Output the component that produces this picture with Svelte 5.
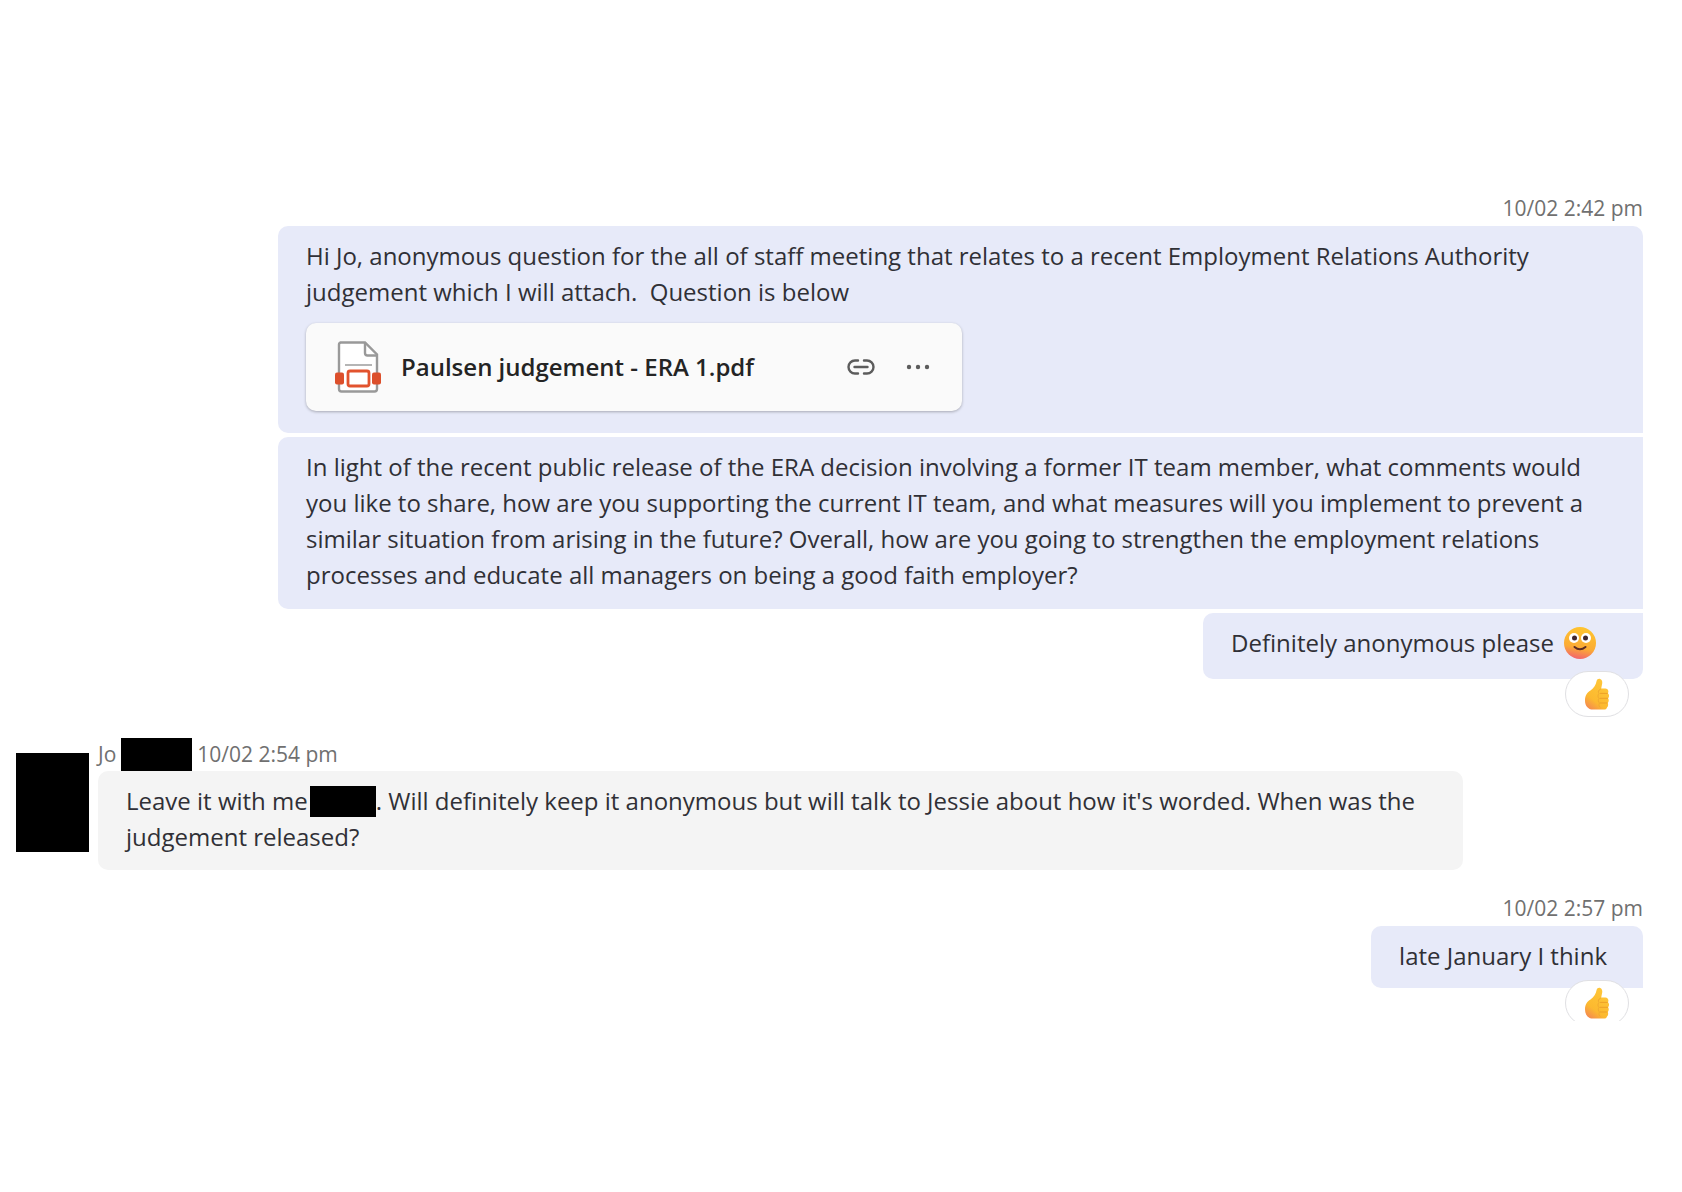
<script>
    let { fileName = 'Paulsen judgement - ERA 1.pdf' } = $props();
</script>

{#snippet thumb(id)}
    <svg width="26" height="32" viewBox="0 0 26 32" aria-hidden="true">
        <defs>
            <linearGradient id={id} x1="0.8" y1="0" x2="0.2" y2="1">
                <stop offset="0" stop-color="#ffc83a" />
                <stop offset="0.7" stop-color="#fcb92f" />
                <stop offset="1" stop-color="#f48a50" />
            </linearGradient>
        </defs>
        <path
            d="M12.600 3C13 1 14.800.3 16.200.900C18 1.600 18.500 3.500 18.200 5.400L17.200 10.400H21.400C24 10.400 25.200 13.400 23.900 15.200C25.500 16.500 25.300 19.200 24.100 20.200C25.100 21.500 24.900 24 23.700 25C24.500 26.200 24.300 28.400 23 29.400C22.500 31 21.500 31.600 19.500 31.600H9C4 31.600 1 27.800 1 22.500C1 17.600 3 14.700 6.500 12.500C10 10.200 11.900 6.700 12.600 3Z"
            fill="url(#{id})"
        />
        <path d="M16.500 15.400H23.300M16 20.300H23.500M16.200 25H23" fill="none" stroke="#eda028" stroke-width="1" stroke-linecap="round" />
        <path d="M16.800 11C14.300 12 13.800 14 15 15.600C13.500 17 13.700 19.300 15 20.300C14 21.800 14.100 23.800 15.400 25C14.600 26.700 15 28.600 16.400 29.500" fill="none" stroke="#f0a92f" stroke-width="1" />
    </svg>
{/snippet}

<main class="chat">
    <section class="group sent">
        <time class="stamp">10/02 2:42 pm</time>

        <article class="bubble first">
            <p>Hi Jo, anonymous question for the all of staff meeting that relates to a recent Employment Relations Authority judgement which I will attach.&nbsp; Question is below</p>
            <div class="file-card">
                <svg class="file-icon" width="48" height="52" viewBox="0 0 48 52" aria-hidden="true">
                    <path d="M6 1.500H31L43 13.500V48Q43 50.500 40.500 50.500H7.500Q5 50.500 5 48V3.500Q5 1.500 7 1.500Z" fill="#fff" stroke="#999" stroke-width="2.400" />
                    <path d="M31 1.500V12Q31 14.500 33.500 14.500H43" fill="none" stroke="#999" stroke-width="2.400" />
                    <path d="M11 24H38" stroke="#b5b5b5" stroke-width="2" />
                    <rect x="1" y="31.500" width="9" height="12" rx="2" fill="#dc4f2b" />
                    <rect x="38" y="31.500" width="9" height="12" rx="2" fill="#dc4f2b" />
                    <rect x="14" y="30" width="21" height="15" rx="2" fill="#fff" stroke="#e2532e" stroke-width="2.800" />
                </svg>
                <a class="file-name" href="#file">{fileName}</a>
                <button class="icon-btn" aria-label="Copy link">
                    <svg width="32" height="32" viewBox="0 0 32 32" fill="none" stroke="#5c5c5c" stroke-width="2.400" stroke-linecap="round" aria-hidden="true">
                        <path d="M13 9.500H10A6.500 6.500 0 0 0 10 22.500H13M19 9.500H22A6.500 6.500 0 0 1 22 22.500H19M9.500 16H22.500" />
                    </svg>
                </button>
                <button class="icon-btn" aria-label="More options">
                    <svg width="32" height="32" viewBox="0 0 32 32" fill="#5c5c5c" aria-hidden="true">
                        <circle cx="7" cy="16" r="2.200" />
                        <circle cx="16" cy="16" r="2.200" />
                        <circle cx="25" cy="16" r="2.200" />
                    </svg>
                </button>
            </div>
        </article>

        <article class="bubble middle">
            <p>In light of the recent public release of the ERA decision involving a former IT team member, what comments would you like to share, how are you supporting the current IT team, and what measures will you implement to prevent a similar situation from arising in the future? Overall, how are you going to strengthen the employment relations processes and educate all managers on being a good faith employer?</p>
        </article>

        <article class="bubble last">
            <p class="with-emoji">
                Definitely anonymous please
                <svg class="smile" width="34" height="34" viewBox="0 0 34 34" role="img" aria-label="Smile">
                    <defs>
                        <linearGradient id="face" x1="0.6" y1="0" x2="0.4" y2="1">
                            <stop offset="0" stop-color="#ffc52f" />
                            <stop offset="0.65" stop-color="#fbab35" />
                            <stop offset="1" stop-color="#f2636f" />
                        </linearGradient>
                    </defs>
                    <circle cx="17" cy="17" r="16" fill="url(#face)" />
                    <circle cx="11" cy="12" r="5" fill="#fff" />
                    <circle cx="23" cy="12" r="5" fill="#fff" />
                    <circle cx="11.500" cy="12" r="2.500" fill="#40272f" />
                    <circle cx="22.500" cy="12" r="2.500" fill="#40272f" />
                    <path d="M11.500 21Q17 25.500 22.500 21" fill="none" stroke="#5a2b22" stroke-width="2" stroke-linecap="round" />
                </svg>
            </p>
            <button class="reaction" aria-label="Like, 1 reaction">{@render thumb('thumb-a')}</button>
        </article>
    </section>

    <section class="received">
        <span class="avatar"></span>
        <div class="thread">
            <header class="author">
                <span>Jo</span>
                <span class="redacted-name"></span>
                <time>10/02 2:54 pm</time>
            </header>
            <article class="bubble grey">
                <p>Leave it with me<span class="redacted"></span>. Will definitely keep it anonymous but will talk to Jessie about how it's worded. When was the judgement released?</p>
            </article>
        </div>
    </section>

    <section class="group sent">
        <time class="stamp">10/02 2:57 pm</time>
        <article class="bubble single">
            <p>late January I think</p>
            <button class="reaction" aria-label="Like, 1 reaction">{@render thumb('thumb-b')}</button>
        </article>
    </section>
</main>

<style>
    :global(body) {
        margin: 0;
        background: #fff;
    }

    .chat {
        padding: 195px 39px 33px 16px;
        overflow: hidden;
        color: #303036;
        font-family: "Open Sans", "Noto Sans", sans-serif;
        font-size: 24px;
        line-height: 36px;
    }

    p {
        margin: 0;
    }

    .group {
        display: flex;
        flex-direction: column;
        gap: 4px;
    }

    .sent {
        align-items: flex-end;
        margin-left: 262px;
    }

    .stamp,
    .author {
        color: #707070;
        font-size: 21px;
        line-height: 27px;
    }

    .bubble {
        position: relative;
        box-sizing: border-box;
        padding: 12px 36px 14px 28px;
        background: #e7eaf9;
        border-radius: 10px;
    }

    .first {
        width: 100%;
        padding-bottom: 22px;
        border-bottom-right-radius: 0;
    }

    .middle {
        padding-bottom: 16px;
        border-top-right-radius: 0;
        border-bottom-right-radius: 0;
    }

    .last {
        padding-bottom: 18px;
        border-top-right-radius: 0;
    }

    .single {
        border-bottom-right-radius: 0;
    }

    .file-card {
        display: flex;
        align-items: center;
        box-sizing: border-box;
        max-width: 656px;
        height: 88px;
        margin-top: 13px;
        padding: 0 28px;
        background: #fafafa;
        border-radius: 10px;
        box-shadow: 0 1px 3px rgba(0, 0, 0, 0.28);
    }

    .file-icon {
        flex: none;
        margin-right: 19px;
    }

    .file-name {
        flex: 1;
        color: #242424;
        font-weight: 600;
        text-decoration: none;
    }

    .icon-btn {
        width: 32px;
        height: 32px;
        margin-left: 25px;
        padding: 0;
        border: none;
        background: none;
        cursor: pointer;
    }

    .icon-btn svg {
        display: block;
    }

    .with-emoji {
        display: flex;
        align-items: center;
        gap: 9px;
        padding-right: 10px;
    }

    .reaction {
        position: absolute;
        right: 14px;
        top: calc(100% - 8px);
        display: flex;
        align-items: center;
        justify-content: center;
        width: 64px;
        height: 46px;
        padding: 0;
        background: #fff;
        border: 1px solid #e0e0e3;
        border-radius: 23px;
        cursor: pointer;
    }

    .received {
        display: flex;
        gap: 9px;
        margin: 59px 180px 25px 0;
    }

    .avatar {
        flex: none;
        width: 73px;
        height: 99px;
        margin-top: 15px;
        background: #000;
    }

    .thread {
        flex: 1;
    }

    .author {
        display: flex;
        align-items: center;
        gap: 5px;
    }

    .redacted-name {
        width: 71px;
        height: 33px;
        background: #000;
    }

    .grey {
        padding-top: 12px;
        padding-bottom: 15px;
        background: #f4f4f4;
    }

    .redacted {
        display: inline-block;
        width: 66px;
        height: 31px;
        margin-left: 2px;
        background: #000;
        vertical-align: -7px;
    }
</style>
